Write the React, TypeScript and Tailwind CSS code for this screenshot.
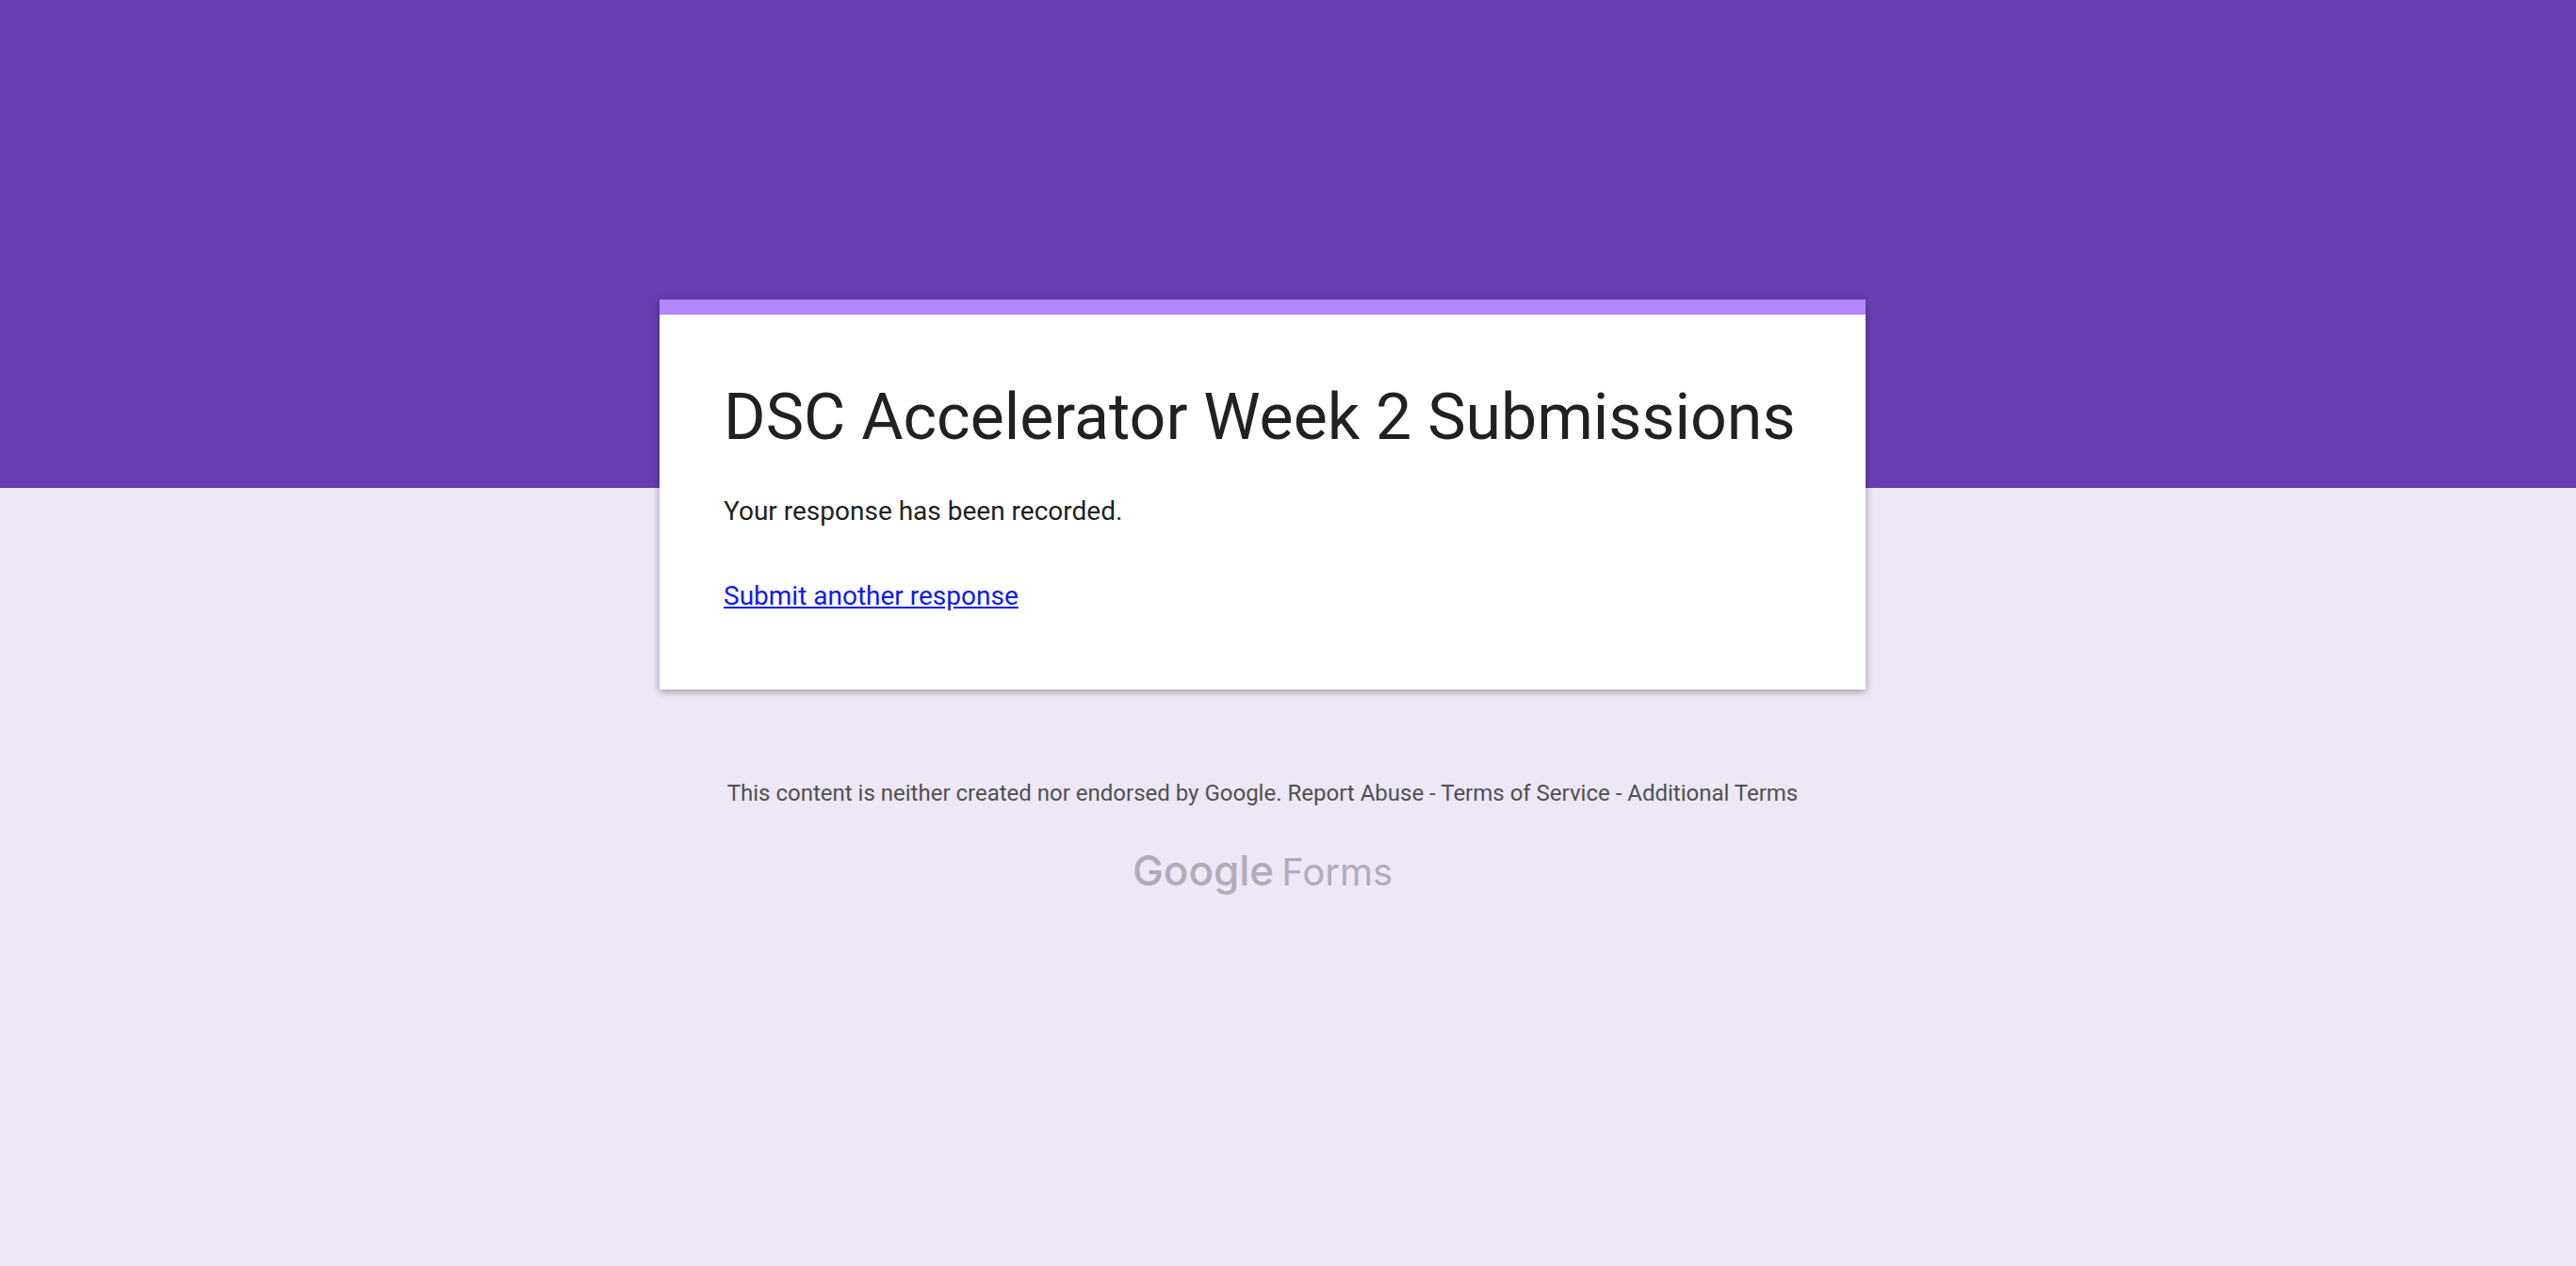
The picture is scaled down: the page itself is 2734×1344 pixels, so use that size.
const footerLinks = ['Report Abuse', 'Terms of Service', 'Additional Terms'];

function ConfirmationCard() {
  return (
    <section className="w-full border-t-16 border-[#b388ff] bg-white px-17 pt-16 pb-[79px] shadow-[0_2px_8px_rgba(0,0,0,0.37)]">
      <h1 className="text-[68px] leading-[90px] font-normal text-[#212121]">
        DSC Accelerator Week 2 Submissions
      </h1>
      <p className="mt-[35px] text-[28px] leading-10 text-[#212121]">
        Your response has been recorded.
      </p>
      <p className="mt-[50px] text-[28px] leading-10">
        <a href="#another" className="text-[#0b1af5] underline">
          Submit another response
        </a>
      </p>
    </section>
  );
}

function Footer() {
  return (
    <footer className="mt-[92px] flex flex-col items-center">
      <p className="text-center text-[24px] leading-9 text-[#505050]">
        This content is neither created nor endorsed by Google.{' '}
        {footerLinks.map((label, i) => (
          <span key={label}>
            {i > 0 && ' - '}
            <a href="#terms">{label}</a>
          </span>
        ))}
      </p>
      <a
        href="#forms"
        className="mt-[34px] flex items-baseline gap-2 font-['Inter',sans-serif] leading-[60px] text-[#b2abb9]"
      >
        <span className="text-[44px] font-medium">Google</span>
        <span className="text-[40px] font-normal">Forms</span>
      </a>
    </footer>
  );
}

export default function App() {
  return (
    <div className="min-h-screen bg-[#ede7f6] bg-[linear-gradient(#673fb4,#673fb4)] bg-[length:100%_518px] bg-no-repeat pr-[54px] pt-[318px] font-['Roboto',sans-serif]">
      <main className="mx-auto w-full max-w-7xl">
        <ConfirmationCard />
        <Footer />
      </main>
    </div>
  );
}
